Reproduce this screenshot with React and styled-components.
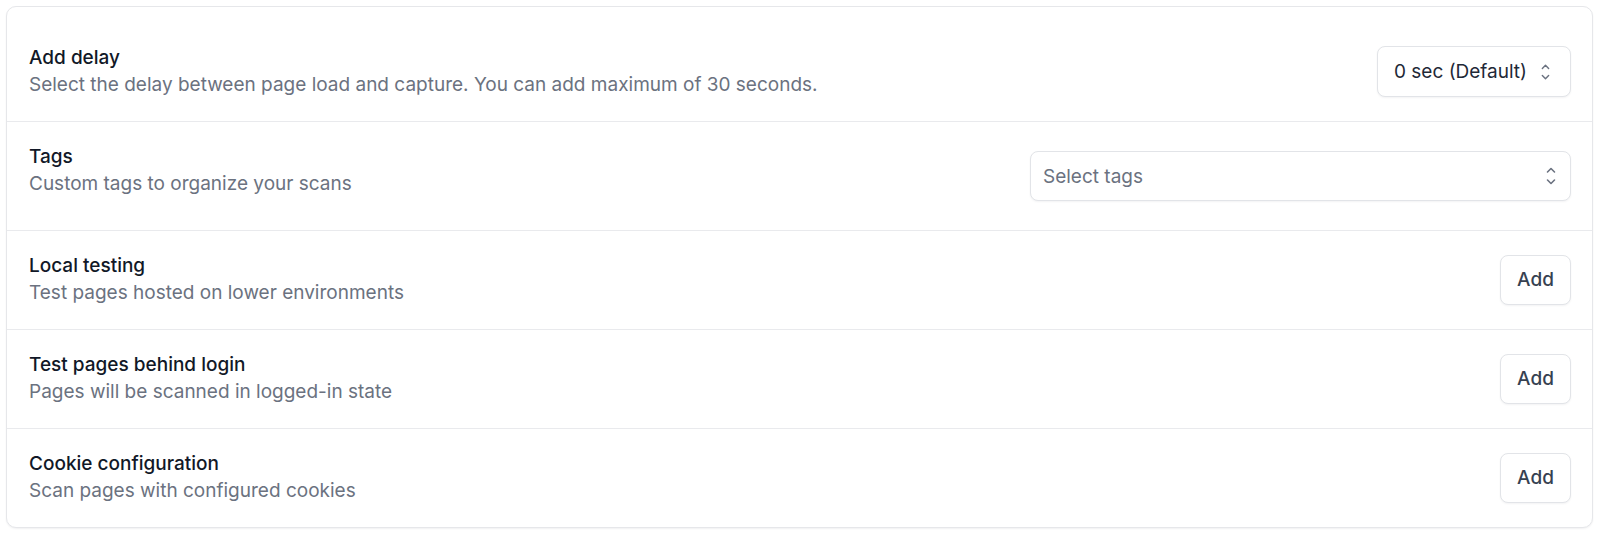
import React from "react";
import styled, { createGlobalStyle } from "styled-components";

const GlobalStyle = createGlobalStyle`
  * { box-sizing: border-box; }
  body {
    margin: 0;
    background: #fff;
    font-family: Inter, "Noto Sans", sans-serif;
    -webkit-font-smoothing: antialiased;
  }
`;

const Page = styled.div`
  padding: 6px 7px 8px 6px;
`;

const Card = styled.div`
  border: 1px solid #e6e7ea;
  border-radius: 10px;
  background: #fff;
  padding-top: 16px;
  box-shadow: 0 1px 2px rgba(16, 24, 40, 0.06);
`;

const Row = styled.div`
  display: flex;
  align-items: center;
  justify-content: space-between;
  gap: 24px;
  padding: 22px 21px 23px 22px;
  & + & {
    border-top: 1px solid #e9eaed;
  }
`;

const Text = styled.div`
  display: flex;
  flex-direction: column;
  gap: 1px;
  min-width: 0;
  align-self: ${(p) => (p.$top ? "flex-start" : "center")};
`;

const Title = styled.div`
  font-size: 19px;
  line-height: 26px;
  font-weight: 500;
  color: #111827;
`;

const Desc = styled.div`
  font-size: 19px;
  line-height: 26px;
  color: #6b7280;
`;

const SelectBox = styled.div`
  display: flex;
  flex-shrink: 0;
  align-items: center;
  justify-content: space-between;
  gap: 14px;
  height: ${(p) => (p.$spaced ? 50 : 51)}px;
  width: ${(p) => p.$width}px;
  margin: ${(p) => (p.$spaced ? "7px 0 6px" : "0")};
  padding: 0 ${(p) => p.$padRight}px 0 ${(p) => p.$padLeft}px;
  border: 1px solid #e2e4e8;
  border-radius: 8px;
  background: #fff;
  box-shadow: 0 1px 2px rgba(16, 24, 40, 0.05);
  font-size: 19px;
  white-space: nowrap;
  color: ${(p) => (p.$placeholder ? "#6b7280" : "#1f2937")};
`;

const Button = styled.button`
  flex-shrink: 0;
  height: 50px;
  width: 71px;
  border: 1px solid #e2e4e8;
  border-radius: 8px;
  background: #fff;
  box-shadow: 0 1px 2px rgba(16, 24, 40, 0.05);
  font-family: inherit;
  font-size: 19px;
  font-weight: 500;
  color: #374151;
  cursor: pointer;
`;

const Chevrons = () => (
  <svg width="10" height="20" viewBox="0 0 10 20" fill="none">
    <path
      d="M1.5 6 L5 2.5 L8.5 6 M1.5 14 L5 17.5 L8.5 14"
      stroke="#6b7280"
      strokeWidth="1.6"
      strokeLinecap="round"
      strokeLinejoin="round"
    />
  </svg>
);

const addRows = [
  { title: "Local testing", desc: "Test pages hosted on lower environments" },
  { title: "Test pages behind login", desc: "Pages will be scanned in logged-in state" },
  { title: "Cookie configuration", desc: "Scan pages with configured cookies" },
];

const App = () => {
  return (
    <Page>
      <GlobalStyle />
      <Card>
        <Row>
          <Text>
            <Title>Add delay</Title>
            <Desc>
              Select the delay between page load and capture. You can add maximum of 30 seconds.
            </Desc>
          </Text>
          <SelectBox $width={194} $padLeft={16} $padRight={20}>
            <span>0 sec (Default)</span>
            <Chevrons />
          </SelectBox>
        </Row>
        <Row>
          <Text $top>
            <Title>Tags</Title>
            <Desc>Custom tags to organize your scans</Desc>
          </Text>
          <SelectBox $width={541} $padLeft={12} $padRight={14} $spaced $placeholder>
            <span>Select tags</span>
            <Chevrons />
          </SelectBox>
        </Row>
        {addRows.map((item) => (
          <Row key={item.title}>
            <Text>
              <Title>{item.title}</Title>
              <Desc>{item.desc}</Desc>
            </Text>
            <Button>Add</Button>
          </Row>
        ))}
      </Card>
    </Page>
  );
};

export default App;
